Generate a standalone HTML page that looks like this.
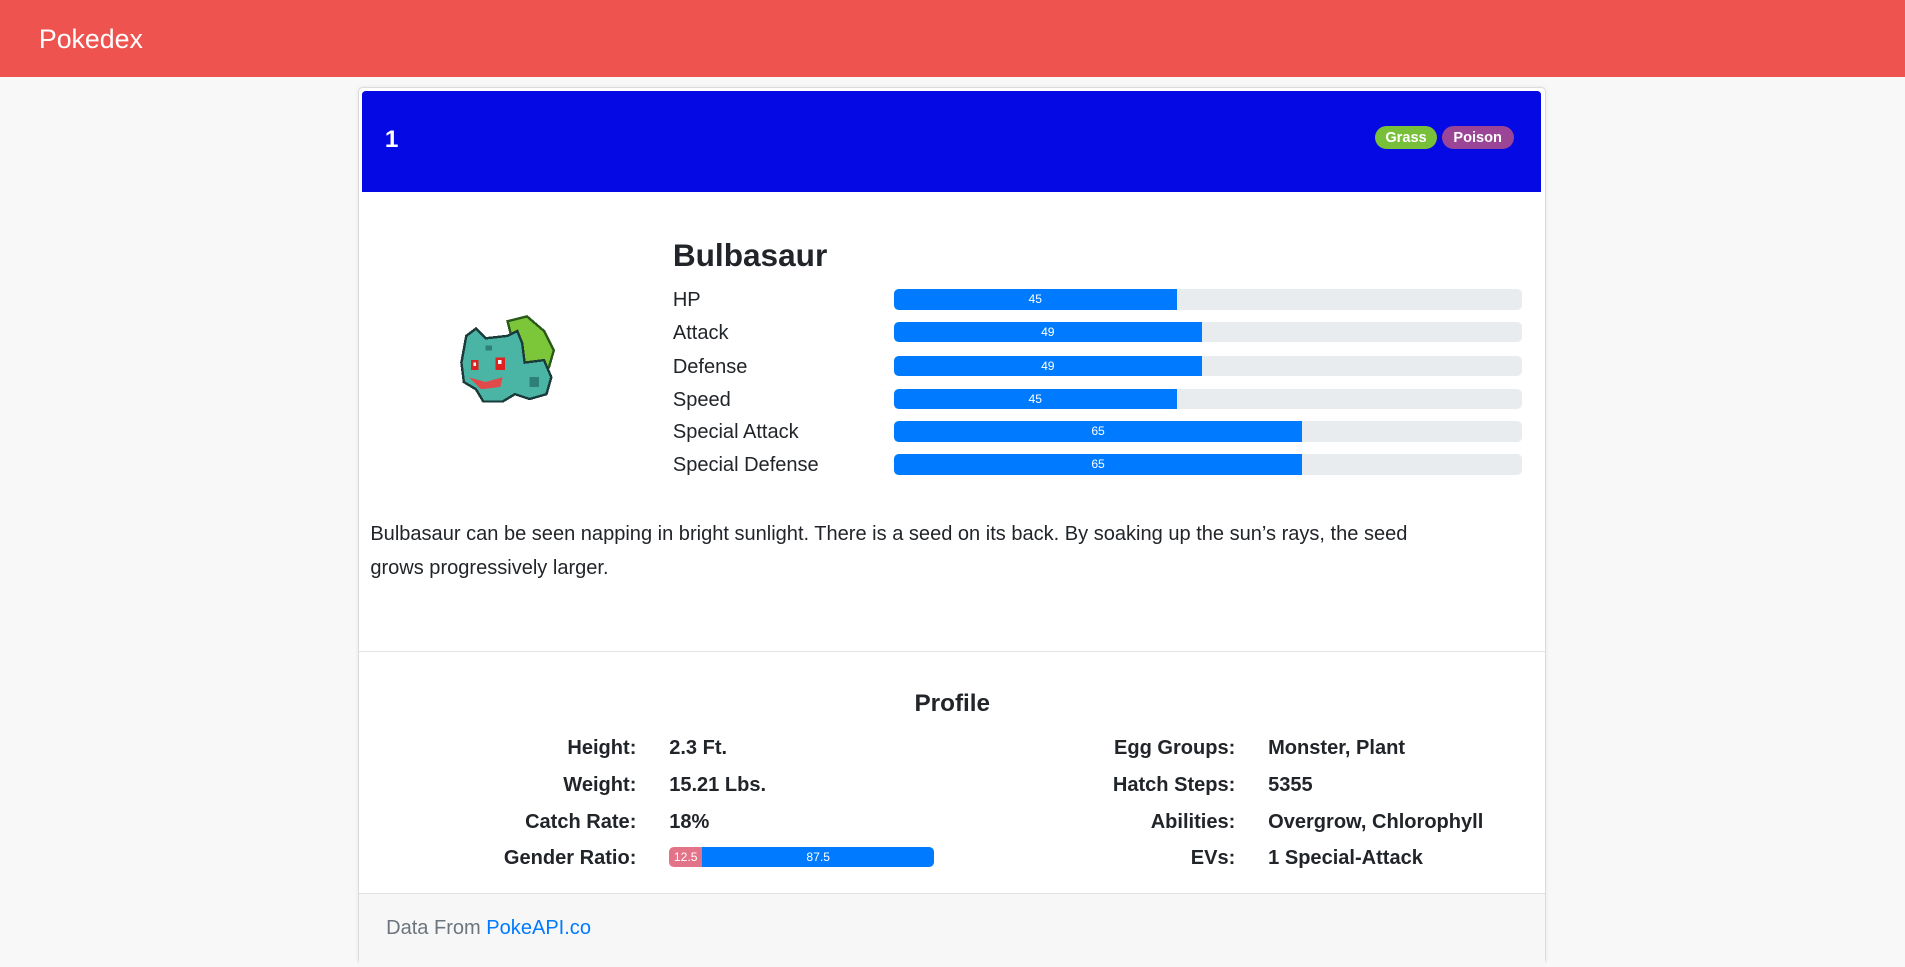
<!DOCTYPE html>
<html><head><meta charset="utf-8"><style>
html{zoom:1.2149}
body{margin:0;width:1568px;height:780px;overflow:hidden;background:#f8f8f8;font-family:"Liberation Sans",sans-serif;color:#212529;position:relative}
.nav{position:absolute;left:0;top:0;width:1568px;height:63px;background:#ef5350}
.brand{position:absolute;left:32px;top:20px;font-size:22px;color:#fff}
.card{position:absolute;left:295px;top:72px;width:976px;height:720px;background:#fff;border:1px solid #dcdcdc;border-radius:4px;box-shadow:0 0 3px rgba(0,0,0,.08)}
.head{position:absolute;left:2px;top:2px;width:971px;height:83px;background:#0509e3;border-radius:3px 3px 0 0}
.num{position:absolute;left:19px;top:29px;color:#fff;font-weight:bold;font-size:20px}
.badge{position:absolute;top:29px;height:19px;line-height:20px;border-radius:10px;color:#fff;font-weight:bold;font-size:12px;text-align:center}
.a{position:absolute}
.lbl{position:absolute;left:258px;font-size:16.5px}
.bar{position:absolute;left:440px;width:517px;height:17px;background:#e9ecef;border-radius:4px;overflow:hidden}
.bar div{height:17px;background:#007bff;color:#fff;font-size:10px;line-height:17px;text-align:center}
.pl{position:absolute;font-size:16.5px;font-weight:600;text-align:right;width:200px}
.pv{position:absolute;font-size:16.5px;font-weight:600}
</style></head><body>
<div class="nav"><div class="brand">Pokedex</div></div>
<div class="card">
 <div class="head"><div class="num">1</div>
  <div class="badge" style="left:834px;width:51px;background:#78c03a">Grass</div>
  <div class="badge" style="left:889px;width:59px;background:#9a4595">Poison</div>
 </div>
 <svg class="a" style="left:82px;top:186px" width="80" height="76" viewBox="0 0 80 76" shape-rendering="crispEdges">
  <path d="M40 6 L56 2 L70 14 L78 30 L74 44 L50 46 Z" fill="#7cc63a" stroke="#2a5a1a" stroke-width="2"/>
  <path d="M6 18 L14 12 L22 20 L40 18 L48 14 L52 24 L54 40 L70 38 L76 52 L72 66 L58 70 L46 66 L36 72 L20 72 L14 62 L4 56 L2 40 Z" fill="#4bb5a5" stroke="#1b3b3b" stroke-width="2"/>
  <path d="M8 52 L22 56 L36 52 L34 60 L18 62 Z" fill="#e04a4a"/>
  <rect x="10" y="38" width="6" height="8" fill="#d22"/><rect x="30" y="36" width="8" height="10" fill="#d22"/>
  <rect x="12" y="40" width="2" height="3" fill="#fff"/><rect x="32" y="38" width="3" height="3" fill="#fff"/>
  <rect x="22" y="26" width="5" height="4" fill="#2e7f76"/><rect x="58" y="52" width="8" height="8" fill="#2e7f76"/>
 </svg>
 <div class="a" style="left:258px;top:122px;font-size:26px;font-weight:600">Bulbasaur</div>
 <div class="lbl" style="top:165px">HP</div><div class="bar" style="top:165px"><div style="width:45%">45</div></div>
 <div class="lbl" style="top:192px">Attack</div><div class="bar" style="top:192px"><div style="width:49%">49</div></div>
 <div class="lbl" style="top:220px">Defense</div><div class="bar" style="top:220px"><div style="width:49%">49</div></div>
 <div class="lbl" style="top:247px">Speed</div><div class="bar" style="top:247px"><div style="width:45%">45</div></div>
 <div class="lbl" style="top:274px">Special Attack</div><div class="bar" style="top:274px"><div style="width:65%">65</div></div>
 <div class="lbl" style="top:301px">Special Defense</div><div class="bar" style="top:301px"><div style="width:65%">65</div></div>
 <div class="a" style="left:9px;top:353px;width:900px;font-size:16.5px;line-height:28px">Bulbasaur can be seen napping in bright sunlight. There is a seed on its back. By soaking up the sun’s rays, the seed grows progressively larger.</div>
 <div class="a" style="left:0;top:463px;width:976px;border-top:1px solid #e3e3e3"></div>
 <div class="a" style="left:0;top:495px;width:976px;text-align:center;font-size:20px;font-weight:600">Profile</div>
 <div class="pl" style="left:28px;top:534px">Height:</div><div class="pv" style="left:255px;top:534px">2.3 Ft.</div>
 <div class="pl" style="left:28px;top:564px">Weight:</div><div class="pv" style="left:255px;top:564px">15.21 Lbs.</div>
 <div class="pl" style="left:28px;top:595px">Catch Rate:</div><div class="pv" style="left:255px;top:595px">18%</div>
 <div class="pl" style="left:28px;top:624px">Gender Ratio:</div>
 <div class="a" style="left:255px;top:624px;width:218px;height:17px;border-radius:4px;overflow:hidden;display:flex;font-size:10px;line-height:17px;color:#fff;text-align:center">
  <div style="width:12.5%;background:#e37388">12.5</div><div style="width:87.5%;background:#007bff">87.5</div></div>
 <div class="pl" style="left:521px;top:534px">Egg Groups:</div><div class="pv" style="left:748px;top:534px">Monster, Plant</div>
 <div class="pl" style="left:521px;top:564px">Hatch Steps:</div><div class="pv" style="left:748px;top:564px">5355</div>
 <div class="pl" style="left:521px;top:595px">Abilities:</div><div class="pv" style="left:748px;top:595px">Overgrow, Chlorophyll</div>
 <div class="pl" style="left:521px;top:624px">EVs:</div><div class="pv" style="left:748px;top:624px">1 Special-Attack</div>
 <div class="a" style="left:0;top:662px;width:976px;height:60px;background:#f7f7f7;border-top:1px solid #e0e0e0"></div>
 <div class="a" style="left:22px;top:682px;font-size:16.5px;color:#6c757d">Data From <span style="color:#007bff">PokeAPI.co</span></div>
</div>
</body></html>
